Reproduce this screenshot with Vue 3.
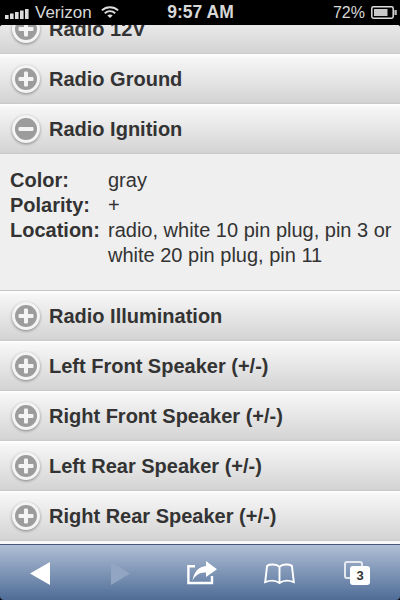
<script setup>
const before = ['Radio 12V', 'Radio Ground']
const after = ['Radio Illumination', 'Left Front Speaker (+/-)', 'Right Front Speaker (+/-)', 'Left Rear Speaker (+/-)', 'Right Rear Speaker (+/-)']
const details = [
  ['Color:', 'gray'],
  ['Polarity:', '+'],
  ['Location:', 'radio, white 10 pin plug, pin 3 or white 20 pin plug, pin 11']
]
</script>

<template>
  <div class="phone">
    <header class="status">
      <div class="status-left">
        <svg class="bars" width="24" height="10" viewBox="0 0 24 10">
          <rect x="0" y="6" width="3.6" height="4" />
          <rect x="5" y="4.5" width="3.6" height="5.5" />
          <rect x="10" y="3" width="3.6" height="7" />
          <rect x="15" y="1.5" width="3.6" height="8.5" />
          <rect x="20" y="0" width="3.6" height="10" />
        </svg>
        <span class="carrier">Verizon</span>
        <svg class="wifi" width="18" height="14" viewBox="0 0 20 14" fill="none" stroke="#ddd" stroke-width="2.2">
          <path d="M1 5.2C6 .6 14 .6 19 5.2" />
          <path d="M4.2 8.3C7.6 5.3 12.4 5.3 15.8 8.3" />
          <path d="M10 13.6 7 10.9C8.8 9.5 11.2 9.5 13 10.9Z" fill="#ddd" stroke="none" />
        </svg>
      </div>
      <div class="time">9:57 AM</div>
      <div class="status-right">
        <span>72%</span>
        <svg width="26" height="13" viewBox="0 0 26 13">
          <rect x=".8" y=".8" width="21.4" height="11.4" rx="1.6" fill="none" stroke="#ddd" stroke-width="1.5" />
          <rect x="3" y="3" width="13.5" height="7" fill="#c8c8c8" />
          <rect x="23.4" y="4" width="2.4" height="5" fill="#bbb" />
        </svg>
      </div>
    </header>

    <main class="viewport">
      <div class="list">
        <div v-for="name in before" :key="name" class="row">
          <span class="toggle"><span class="hbar"></span><span class="vbar"></span></span>
          <span class="label">{{ name }}</span>
        </div>
        <div class="row open">
          <span class="toggle"><span class="hbar"></span></span>
          <span class="label">Radio Ignition</span>
        </div>
        <section class="panel">
          <dl class="specs">
            <template v-for="item in details" :key="item[0]">
              <dt>{{ item[0] }}</dt>
              <dd>{{ item[1] }}</dd>
            </template>
          </dl>
        </section>
        <div v-for="name in after" :key="name" class="row">
          <span class="toggle"><span class="hbar"></span><span class="vbar"></span></span>
          <span class="label">{{ name }}</span>
        </div>
      </div>
    </main>

    <footer class="toolbar">
      <svg width="20" height="23" viewBox="0 0 20 23"><path d="M20 0V23L0 11.5Z" fill="#fff" /></svg>
      <svg width="19" height="23" viewBox="0 0 19 23"><path d="M0 0V23L19 11.5Z" fill="#92a5c2" /></svg>
      <svg width="30" height="24" viewBox="0 0 30 24" fill="none">
        <path d="M8 5.2H1.4V22H25V15" stroke="#fff" stroke-width="2.4" />
        <path d="M19 0 30 8.3 19 16V11.5C13 11 8 14 5.5 20 6.5 11 12 5.5 19 5Z" fill="#fff" />
      </svg>
      <svg width="31" height="21" viewBox="0 0 32 22" fill="none" stroke="#fff" stroke-width="2">
        <path d="M16 4C13 1 6 1 3 3L1 20C6 18 12 18 16 21 20 18 26 18 31 20L29 3C26 1 19 1 16 4ZM16 4V21" />
      </svg>
      <div class="tabs">
        <span class="tab-back"></span>
        <span class="tab-count">3</span>
      </div>
    </footer>
  </div>
</template>

<style>
html, body { margin: 0; background: #000; }
</style>

<style scoped>
.phone {
  width: 400px;
  height: 600px;
  overflow: hidden;
  display: flex;
  flex-direction: column;
  background: #000;
  font-family: "Liberation Sans", Arial, sans-serif;
}
.status {
  height: 25px;
  flex: none;
  background: #000;
  color: #d8d8d8;
  display: grid;
  grid-template-columns: 1fr auto 1fr;
  align-items: center;
  padding: 0 3px 0 5px;
  font-size: 17px;
}
.status-left { display: flex; align-items: center; gap: 6px; }
.bars { fill: #ddd; margin-top: 3px; }
.carrier { margin-right: 3px; }
.wifi { margin-top: -1px; }
.time { font-weight: 700; font-size: 17.5px; margin-right: 1px; }
.status-right { display: flex; justify-content: flex-end; align-items: center; gap: 6px; font-size: 16px; font-weight: 400; }

.viewport {
  flex: 1;
  min-height: 0;
  overflow: hidden;
  border-radius: 3px 3px 0 0;
  background: #eee;
}
.list {
  margin-top: -21px;
  display: flex;
  flex-direction: column;
}
.row {
  height: 50px;
  flex: none;
  box-sizing: border-box;
  display: flex;
  align-items: center;
  gap: 9px;
  padding: 0 12px;
  background: linear-gradient(#fff 0, #f6f6f6 4px, #d4d4d4 96%, #c8c8c8 100%);
  color: #333;
  font-size: 20px;
  font-weight: 700;
}
.label { padding-top: 1px; }
.toggle {
  width: 28px;
  height: 28px;
  flex: none;
  position: relative;
  box-sizing: border-box;
  border-radius: 50%;
  border: 3px solid #f4f4f4;
  background: #9c9c9c;
  box-shadow: 0 1px 3px rgba(0, 0, 0, .4);
}
.hbar, .vbar {
  position: absolute;
  left: 50%;
  top: 50%;
  background: #f4f4f4;
  border-radius: 1px;
  transform: translate(-50%, -50%);
}
.hbar { width: 15px; height: 4px; }
.vbar { width: 4px; height: 15px; }
.panel {
  height: 137px;
  flex: none;
  box-sizing: border-box;
  background: #efefef;
  border-bottom: 1px solid #c4c4c4;
  padding: 14px 0 0 10px;
  color: #333;
  font-size: 20px;
  line-height: 25px;
}
.specs {
  margin: 0;
  display: grid;
  grid-template-columns: 98px 1fr;
}
.specs dt { font-weight: 700; }
.specs dd { margin: 0; }

.toolbar {
  height: 59px;
  flex: none;
  box-sizing: border-box;
  border-top: 3px solid #f8f8f8;
  border-radius: 0 0 4px 4px;
  box-shadow: inset 0 1px 0 #46597a;
  background: linear-gradient(#b1c0d6, #4f6c97);
  display: grid;
  grid-template-columns: 80px 80px 84px 70px 86px;
  justify-items: center;
  align-items: center;
  padding-top: 2px;
}
.tabs { width: 26px; height: 24px; position: relative; }
.tab-back {
  position: absolute;
  left: 0;
  top: 0;
  width: 19px;
  height: 18px;
  box-sizing: border-box;
  border: 2px solid #e6eaf0;
  border-radius: 3px;
}
.tab-count {
  position: absolute;
  right: 0;
  bottom: 0;
  width: 20px;
  height: 19px;
  border-radius: 3px;
  background: #fff;
  color: #333;
  font-size: 13px;
  font-weight: 700;
  line-height: 19px;
  text-align: center;
}
</style>
